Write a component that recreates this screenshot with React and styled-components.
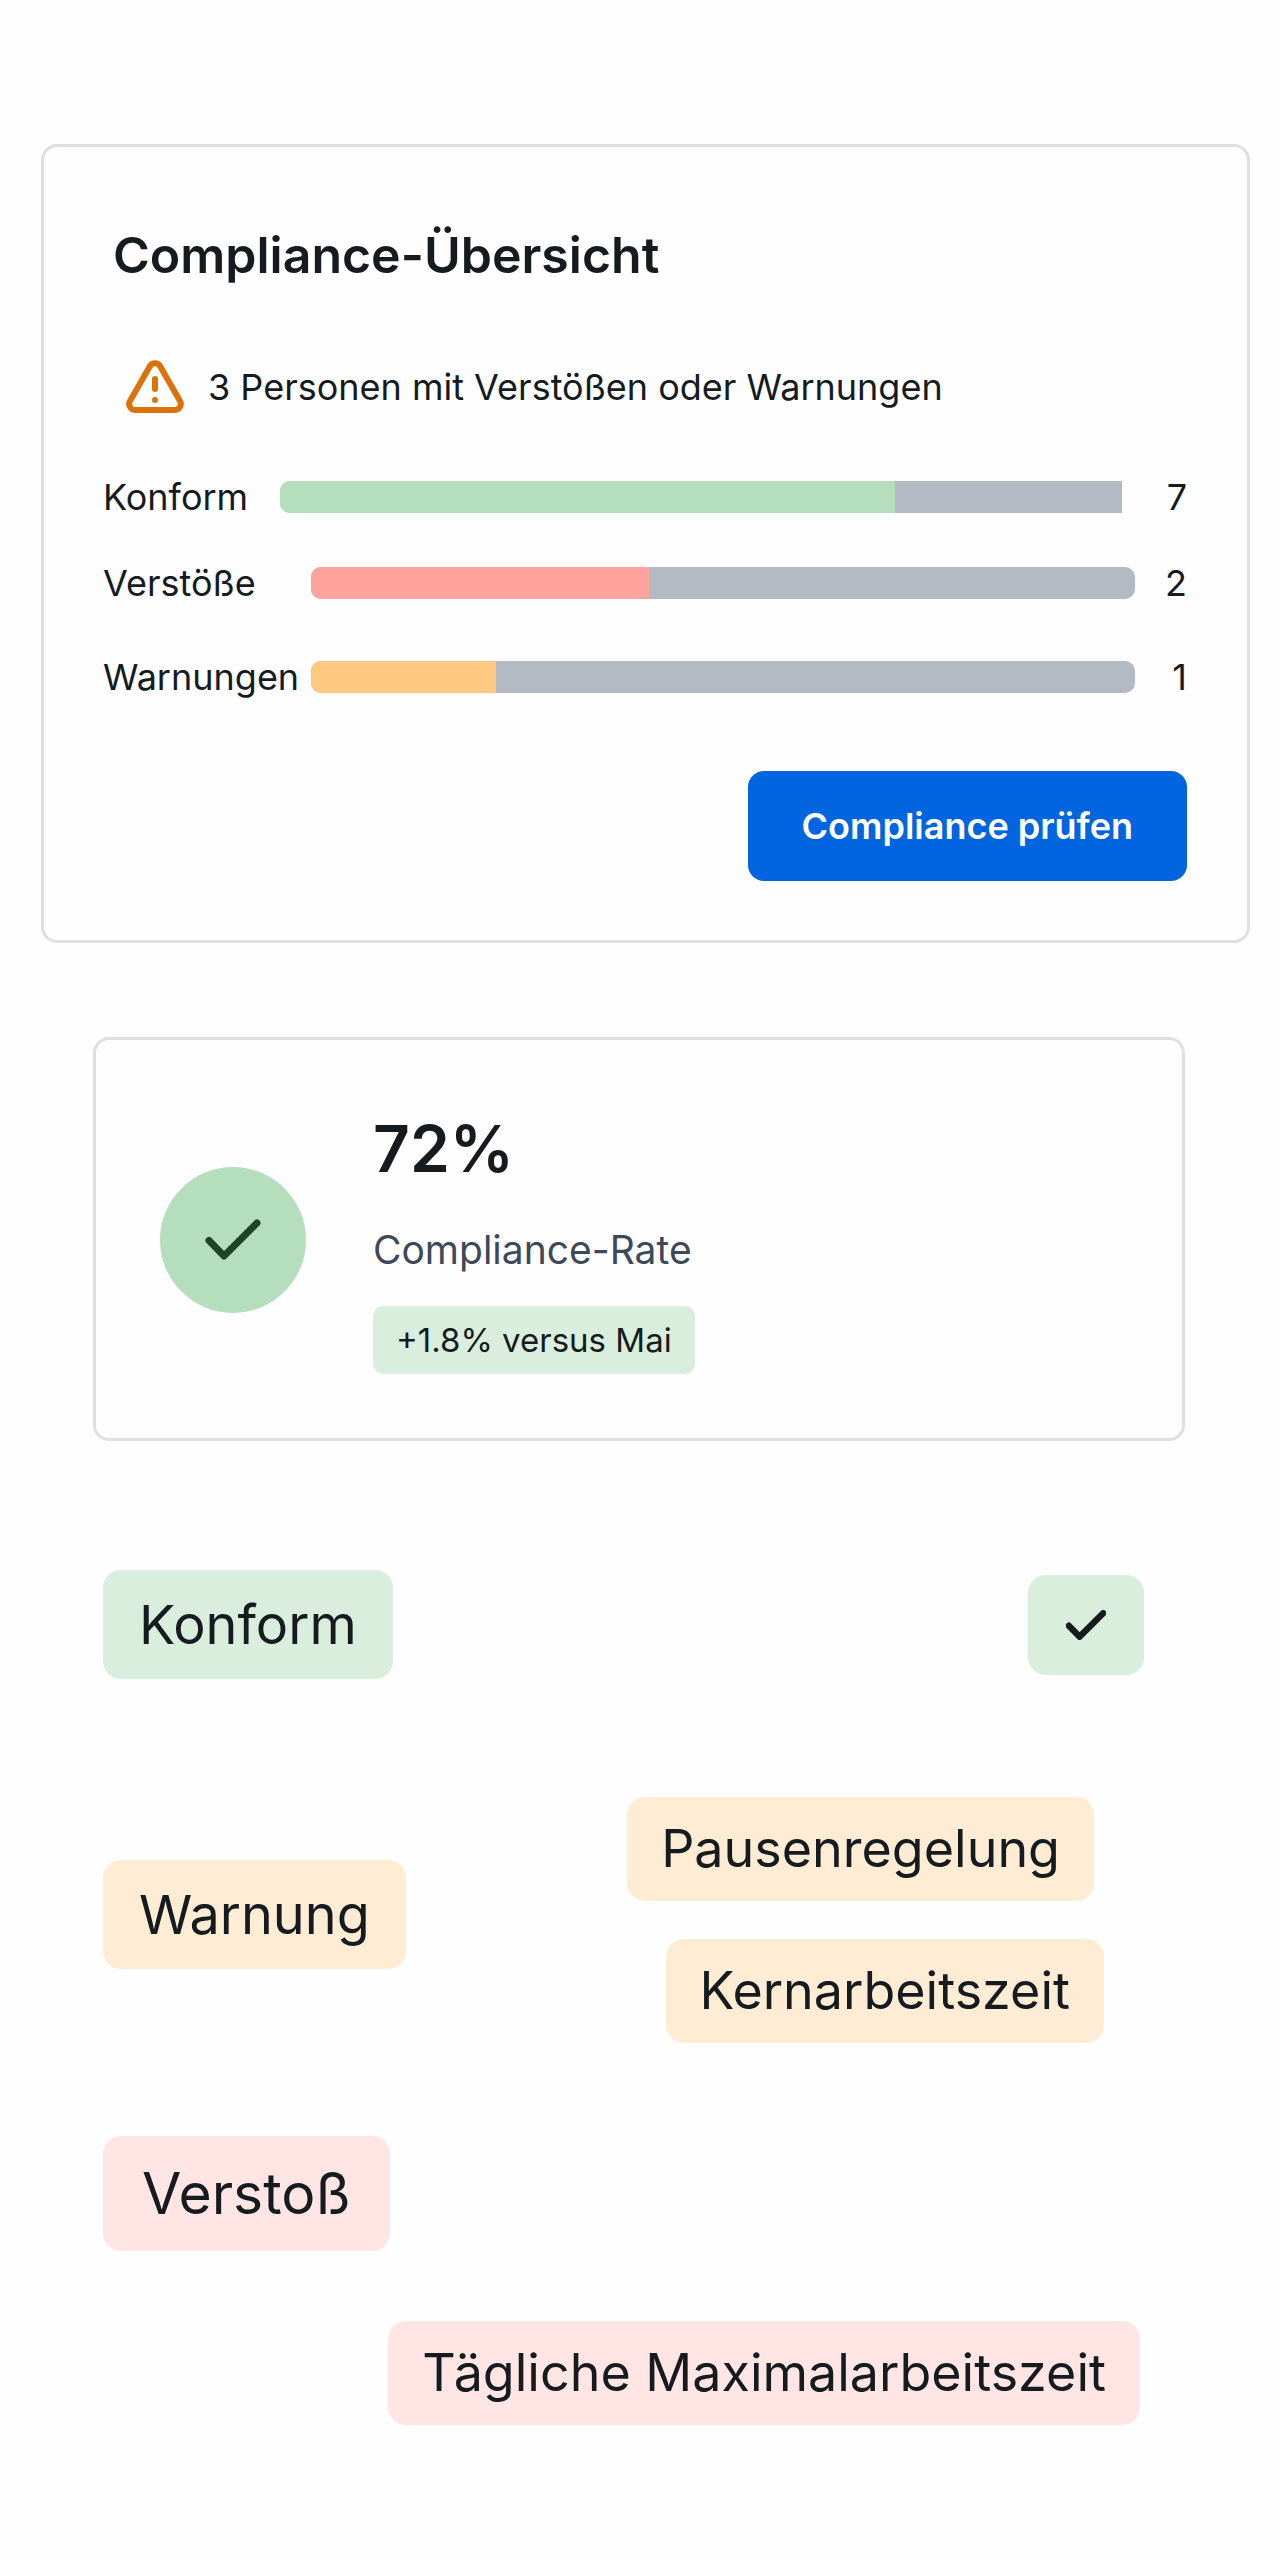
import React from 'react';
import styled, { createGlobalStyle } from 'styled-components';

const GlobalStyle = createGlobalStyle`
  * {
    box-sizing: border-box;
  }

  body {
    margin: 0;
    background-color: #fefefe;
    color: #151b1e;
    font-family: Inter, "Liberation Sans", sans-serif;
  }
`;

const Page = styled.main`
  display: flex;
  flex-direction: column;
  padding: 144px 30px 136px 41px;
`;

const Card = styled.section`
  border: 3px solid #dce0e5;
  border-radius: 16px;
`;

const OverviewCard = styled(Card)`
  display: flex;
  flex-direction: column;
  padding: 76px 60px 59px 59px;
`;

const Title = styled.h2`
  margin: 0 0 73px 10px;
  font-size: 50px;
  line-height: 64px;
  font-weight: 600;
`;

const Alert = styled.p`
  display: flex;
  align-items: center;
  gap: 24px;
  margin: 0 0 60px 23px;
  font-size: 36px;
  line-height: 48px;
`;

const StatRow = styled.div`
  display: grid;
  grid-template-columns: ${({ $label }) => $label}px 1fr ${({ $value }) => $value}px;
  align-items: center;
  margin-bottom: ${({ $gap }) => $gap}px;
  font-size: 36px;
  line-height: 48px;
`;

const Track = styled.div`
  height: 32px;
  border-radius: ${({ $open }) => ($open ? '10px 0 0 10px' : '10px')};
  background-color: #b3bac3;
  overflow: hidden;
`;

const Fill = styled.div`
  height: 100%;
  background-color: ${({ $color }) => $color};
`;

const Value = styled.span`
  text-align: right;
`;

const Button = styled.button`
  align-self: flex-end;
  height: 110px;
  padding: 0 54px;
  border: none;
  border-radius: 16px;
  background-color: #0265e0;
  color: #fff;
  font-family: inherit;
  font-size: 36px;
  font-weight: 600;
  cursor: pointer;
`;

const RateCard = styled(Card)`
  display: flex;
  align-items: center;
  gap: 67px;
  margin: 94px 65px 0 52px;
  padding: 65px 64px 64px;
`;

const Circle = styled.div`
  display: flex;
  flex-shrink: 0;
  align-items: center;
  justify-content: center;
  width: 146px;
  height: 146px;
  border-radius: 50%;
  background-color: #b4debc;
  color: #1f4524;
`;

const RateInfo = styled.div`
  display: flex;
  flex-direction: column;
  align-items: flex-start;
`;

const Rate = styled.strong`
  margin-bottom: 29px;
  font-size: 64px;
  line-height: 88px;
  font-weight: 600;
`;

const RateLabel = styled.span`
  margin-bottom: 28px;
  color: #3d4959;
  font-size: 39px;
  line-height: 56px;
`;

const Delta = styled.span`
  padding: 0 23px;
  border-radius: 10px;
  background-color: #d9eedd;
  font-size: 33px;
  line-height: 68px;
`;

const tones = {
  success: '#d9eedd',
  warning: '#ffecd5',
  danger: '#ffe6e4',
};

const Tags = styled.section`
  display: flex;
  flex-direction: column;
  margin-top: 129px;
  padding-left: 62px;
`;

const TagRow = styled.div`
  display: flex;
  align-items: ${({ $align }) => $align || 'center'};
  justify-content: space-between;
  margin-bottom: ${({ $gap }) => $gap || 0}px;
  padding-right: 106px;
`;

const Tag = styled.span`
  padding: 0 36px;
  border-radius: 18px;
  background-color: ${({ $tone }) => tones[$tone]};
  font-size: 54px;
  line-height: 109px;
  white-space: nowrap;
`;

const LargeTag = styled(Tag)`
  padding: 0 39px;
  font-size: 57px;
  line-height: 115px;
`;

const RuleTag = styled(Tag)`
  padding: 0 34px;
  font-size: 52px;
  line-height: 104px;
`;

const IconTag = styled(Tag)`
  display: flex;
  align-items: center;
  justify-content: center;
  width: 116px;
  height: 100px;
  padding: 0;
`;

const WarningSlot = styled.div`
  display: flex;
  padding-top: 63px;
`;

const RuleList = styled.div`
  display: flex;
  flex-direction: column;
  gap: 38px;
  padding-right: 40px;
`;

const RuleEnd = styled.div`
  display: flex;
  justify-content: flex-end;
  padding-right: ${({ $inset }) => $inset || 0}px;
`;

const WarningIcon = () => (
    <svg width="58" height="53" viewBox="0 0 58 53" fill="none" stroke="#d9730a" strokeWidth="6" strokeLinecap="round" strokeLinejoin="round" aria-hidden="true">
        <path d="M24 6 4 41a6 6 0 0 0 5 9h40a6 6 0 0 0 5-9L34 6a6 6 0 0 0-10 0Z" />
        <path d="M29 19v10" />
        <circle cx="29" cy="40" r="3" fill="#d9730a" stroke="none" />
    </svg>
);

const CheckIcon = ({ width, height, stroke }) => (
    <svg width={width} height={height} viewBox="0 0 56 41" fill="none" stroke="currentColor" strokeWidth={stroke} strokeLinecap="round" strokeLinejoin="round" aria-hidden="true">
        <path d="M4 21.500 19 37 52 4" />
    </svg>
);

const stats = [
    { label: 'Konform', value: 7, share: 73, color: '#b4debc', labelWidth: 177, valueWidth: 65, gap: 38, open: true },
    { label: 'Verstöße', value: 2, share: 41, color: '#ffa39e', labelWidth: 208, valueWidth: 52, gap: 46 },
    { label: 'Warnungen', value: 1, share: 22.5, color: '#ffc880', labelWidth: 208, valueWidth: 52, gap: 70 },
];

const App = () => {
    return (
        <>
            <GlobalStyle />
            <Page>
                <OverviewCard>
                    <Title>Compliance-Übersicht</Title>
                    <Alert>
                        <WarningIcon />
                        3 Personen mit Verstößen oder Warnungen
                    </Alert>
                    {stats.map((stat) => (
                        <StatRow key={stat.label} $label={stat.labelWidth} $value={stat.valueWidth} $gap={stat.gap}>
                            <span>{stat.label}</span>
                            <Track $open={stat.open}>
                                <Fill $color={stat.color} style={{ width: `${stat.share}%` }} />
                            </Track>
                            <Value>{stat.value}</Value>
                        </StatRow>
                    ))}
                    <Button type="button">Compliance prüfen</Button>
                </OverviewCard>

                <RateCard>
                    <Circle>
                        <CheckIcon width={56} height={41} stroke={7} />
                    </Circle>
                    <RateInfo>
                        <Rate>72%</Rate>
                        <RateLabel>Compliance-Rate</RateLabel>
                        <Delta>+1.8% versus Mai</Delta>
                    </RateInfo>
                </RateCard>

                <Tags>
                    <TagRow $gap={118}>
                        <Tag $tone="success">Konform</Tag>
                        <IconTag $tone="success">
                            <CheckIcon width={40} height={30} stroke={9} />
                        </IconTag>
                    </TagRow>
                    <TagRow $gap={93} $align="flex-start">
                        <WarningSlot>
                            <Tag $tone="warning">Warnung</Tag>
                        </WarningSlot>
                        <RuleList>
                            <RuleEnd $inset={10}>
                                <RuleTag $tone="warning">Pausenregelung</RuleTag>
                            </RuleEnd>
                            <RuleEnd>
                                <RuleTag $tone="warning">Kernarbeitszeit</RuleTag>
                            </RuleEnd>
                        </RuleList>
                    </TagRow>
                    <TagRow $gap={70}>
                        <LargeTag $tone="danger">Verstoß</LargeTag>
                    </TagRow>
                    <RuleEnd $inset={110}>
                        <RuleTag $tone="danger">Tägliche Maximalarbeitszeit</RuleTag>
                    </RuleEnd>
                </Tags>
            </Page>
        </>
    );
};

export default App;
